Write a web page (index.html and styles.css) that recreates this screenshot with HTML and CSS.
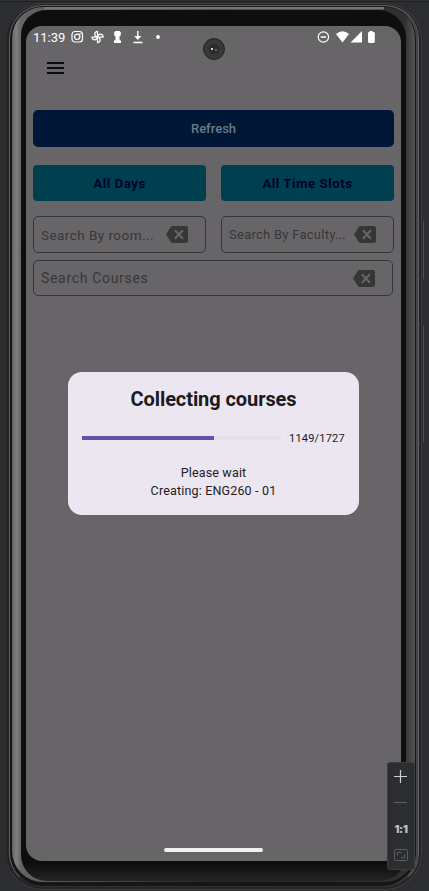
FILE: index.html
```html
<!DOCTYPE html>
<html lang="en">
<head>
<meta charset="utf-8">
<title>Courses</title>
<link rel="stylesheet" href="styles.css">
</head>
<body>
<svg class="defs" width="0" height="0"><symbol id="clear" viewBox="0 0 22 17"><path fill="#373637" d="M6 0h14a2 2 0 0 1 2 2v13a2 2 0 0 1-2 2H6.500q-1 0-1.500-.8L0 8.500 5 .8Q5.500 0 6 0z"/><path d="M8.900 4.300l8 8.400m0-8.400l-8 8.400" stroke="#686568" stroke-width="2" fill="none"/></symbol></svg>
<div class="phone">
  <div class="edge"><div class="rail"><div class="bezel">
    <main class="screen">
      <header class="status">
        <span class="clock">11:39</span>
        <svg class="notifications" width="92" height="14" viewBox="0 0 92 14" fill="none" stroke="#fff">
          <rect x="1" y="1.500" width="10.500" height="10.500" rx="3" stroke-width="1.200"/><circle cx="6.200" cy="6.800" r="2.700" stroke-width="1.200"/><circle cx="9.200" cy="3.800" r=".7" fill="#fff" stroke="none"/>
          <g stroke-width="1.250"><path id="petal" d="M26.500 7V1.400a2.800 2.800 0 0 0-2.800 2.800Q23.700 6 26.500 7"/><use href="#petal" transform="rotate(90 26.500 7)"/><use href="#petal" transform="rotate(180 26.500 7)"/><use href="#petal" transform="rotate(270 26.500 7)"/></g>
          <path fill="#fff" stroke="none" d="M44.500 1h4l1.300 1.200v3L48.500 6.500v3.200l1.500 1V13h-7v-2.300l1.500-1V6.500l-1.300-1.300v-3z"/>
          <path d="M66.800 1v7M62.500 12.500h9" stroke-width="1.400"/><path d="M63.200 6h7.200l-3.600 4z" fill="#fff" stroke="none"/>
          <circle cx="87" cy="7" r="1.900" fill="#fff" stroke="none"/>
        </svg>
        <svg class="system" width="60" height="14" viewBox="0 0 60 14">
          <circle cx="6.400" cy="7" r="5.200" fill="none" stroke="#fff" stroke-width="1.200"/><path d="M3.700 7h5.400" stroke="#fff" stroke-width="1.500"/>
          <path fill="#fff" d="M19 4q6.500-5.500 13 0l-6.500 8.500zM33.500 12.500L45 1v11.500zM52.500 1h3v1h1q1.300 0 1.300 1.300v8.200q0 1.500-1.500 1.500h-3.800Q51 13 51 11.500V3.300Q51 2 52.500 2z"/>
        </svg>
      </header>
      <nav class="appbar"><svg width="17" height="12" viewBox="0 0 17 12"><path d="M0 1h17M0 6h17M0 11h17" stroke="#0b0a0c" stroke-width="1.900"/></svg></nav>
      <button class="refresh">Refresh</button>
      <div class="pair filters"><button class="filter">All Days</button><button class="filter slots">All Time Slots</button></div>
      <div class="pair fields">
        <div class="field"><span class="room">Search By room...</span><svg class="clear"><use href="#clear"/></svg></div>
        <div class="field"><span class="faculty">Search By Faculty...</span><svg class="clear"><use href="#clear"/></svg></div>
      </div>
      <div class="field wide"><span class="courses">Search Courses</span><svg class="clear"><use href="#clear"/></svg></div>
      <div class="camera"></div>
      <div class="handle"></div>
      <section class="dialog" role="dialog">
        <h1>Collecting courses</h1>
        <div class="progress"><div class="track"><div class="bar" style="width:66.530%"></div></div><span class="count">1149/1727</span></div>
        <p class="wait">Please wait</p>
        <p class="item">Creating: ENG260 - 01</p>
      </section>
    </main>
  </div></div></div>
  <i class="key power"></i><i class="key volume"></i>
</div>
<aside class="zoom">
  <svg width="27" height="107" viewBox="0 0 27 107" fill="none">
    <path d="M13.500 7v13M7 13.500h13" stroke="#cfd0d3" stroke-width="1.200"/>
    <path d="M7 39.500h13" stroke="#5b5d60" stroke-width="1.200"/>
    <rect x="7.500" y="86.500" width="13" height="11" rx="1" stroke="#5b5d60"/><path d="M10.500 92.500v-3H14M17.500 91.500v3H14" stroke="#5b5d60"/>
  </svg>
  <span class="ratio">1:1</span>
</aside>
</body>
</html>
```
FILE: styles.css
```css
* { box-sizing: border-box; }
body { margin: 0; height: 891px; overflow: hidden; padding: 2px 7px 1px 6px; background: #2b2d30; border-top: 1px solid #303236; box-shadow: inset 0 1px #1f2023; font-family: Roboto, sans-serif; position: relative; }
.defs { position: absolute; }
.phone { position: relative; height: 887px; border-radius: 37px; background: #242424; padding: 1px 2px 2px 3px; border: 1px solid #3d3d3d; border-width: 1px 1px 1px 0; }
.edge { height: 100%; border-radius: 34px; padding: 1px 3px 4px 2px; border: 1px solid #606060; border-bottom-color: #303030; background: #161616; box-shadow: inset -2px 0 #454545; }
.rail { height: 100%; border-radius: 31px; padding: 3px 9px 1px; background: linear-gradient(#777 0 2px, transparent 3px) 50% 0 / 340px 4px no-repeat, linear-gradient(90deg, #606060 0, #808080 4px, #646464 9px, #242424 50%, #303030 97.500%, #484848 99%, #505050 100%); }
.bezel { height: 100%; border-radius: 25px 28px 26px 26px; padding: 16px 5px 20px; background: linear-gradient(#0d0e0d 0 98%, #242424 100%); }
.screen { position: relative; height: 835px; padding: 0 7px; border-radius: 16px; background: #686568; }
.status { height: 22px; display: flex; align-items: center; position: relative; }
.clock { width: 37px; font-size: 13px; color: #fff; white-space: nowrap; letter-spacing: 0; }
.notifications { margin-left: 1px; }
.system { margin-left: auto; margin-right: 17px; }
.appbar { height: 62px; padding: 14px; }
.appbar svg { display: block; }
button { display: block; border: 0; font-family: Roboto, sans-serif; padding: 0; }
.refresh { width: 100%; height: 37px; border-radius: 5px; background: #001737; color: #687a80; font-size: 13px; font-weight: 500; letter-spacing: 0; }
.pair { display: grid; grid-template-columns: 173px 173px; gap: 15px; }
.filters { margin-top: 18px; }
.filter { height: 36px; border-radius: 4px; background: #003f50; color: #00002e; font-size: 13.300px; font-weight: 700; letter-spacing: .5px; }
.fields { margin-top: 15px; }
.field { height: 37px; border: 1px solid #363537; border-radius: 5px; padding: 0 17px 0 7px; display: flex; align-items: center; justify-content: space-between; color: #373638; white-space: nowrap; }
.clear { width: 22px; height: 17px; flex: none; }
.wide { width: 360px; height: 36px; margin-top: 7px; }
.room { font-size: 13.500px; letter-spacing: .45px; }
.faculty { font-size: 13px; letter-spacing: .26px; }
.courses { font-size: 14px; letter-spacing: .68px; }
.camera { position: absolute; left: 177px; top: 12px; width: 22px; height: 22px; border-radius: 50%; border: 1px solid #222; background: radial-gradient(circle at 8px 10px, #d9cce0 0 .7px, transparent 1.500px), radial-gradient(circle at 12px 11px, #65758e 0 .6px, transparent 1.500px), radial-gradient(#292a2c 0 4px, #383838 6px); }
.handle { position: absolute; left: 138px; bottom: 9px; width: 99px; height: 4px; border-radius: 2px; background: #f1f1f1; }
.dialog { position: absolute; left: 42px; top: 346px; width: 291px; height: 143px; border-radius: 14px; background: #ece6f1; color: #1c1b20; padding: 15px 14px; text-align: center; }
h1 { margin: 0; font-size: 20px; line-height: 24px; font-weight: 700; letter-spacing: -.08px; white-space: nowrap; }
.progress { display: flex; align-items: center; height: 16px; margin-top: 19px; }
.track { flex: none; width: 199px; height: 4px; background: #e5dfea; }
.bar { height: 100%; background: #6650a4; }
.count { margin-left: 8px; font-size: 11px; letter-spacing: .2px; white-space: nowrap; }
p { margin: 0; font-size: 12.500px; line-height: 18px; letter-spacing: .17px; white-space: nowrap; }
.wait { margin-top: 18px; }
.zoom { position: absolute; left: 387px; top: 761px; width: 28px; height: 108px; border: 1px solid #3b3d40; border-radius: 3px; background: #2b2d30; }
.zoom svg { position: absolute; left: -1px; top: 0; }
.ratio { position: absolute; top: 59px; left: 0; width: 26px; text-align: center; font: 900 11px/14px Inter, sans-serif; letter-spacing: -.3px; color: #bcbec2; }
.key { position: absolute; left: 416px; width: 2px; background: #252525; border-right: 1px solid #505050; }
.power { top: 217px; height: 58px; }
.volume { top: 322px; height: 116px; }
```
